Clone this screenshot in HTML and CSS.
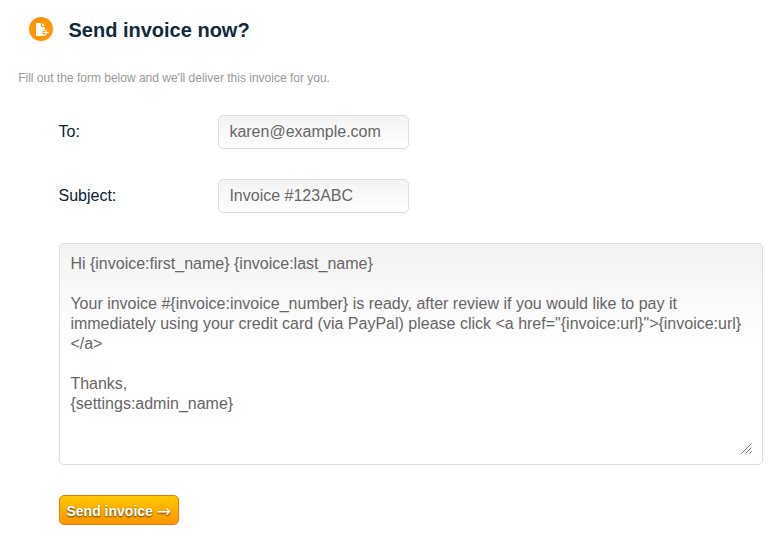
FILE: index.html
```html
<!DOCTYPE html>
<html lang="en">
<head>
<meta charset="utf-8">
<title>Send invoice</title>
<link rel="stylesheet" href="styles.css">
</head>
<body>
<main class="page">
  <header class="header">
    <svg class="header-icon" width="24" height="24" viewBox="0 0 24 24" aria-hidden="true">
      <circle cx="12" cy="12" r="12" fill="#ff9500"/>
      <path d="M7 6h5v4h4v9H7z" fill="#fff"/>
      <path d="M13 6l3 3h-3z" fill="#fff"/>
      <path d="M17 12v8M13.500 15.500h7" stroke="#ff9500" stroke-width="3"/>
      <path d="M17 12.500v6M14 15.500h6" stroke="#fff" stroke-width="1.200"/>
    </svg>
    <h1 class="title">Send invoice now?</h1>
  </header>
  <p class="intro">Fill out the form below and we'll deliver this invoice for you.</p>
  <form class="form">
    <div class="row">
      <label class="label" for="to">To:</label>
      <input class="field" id="to" type="text" value="karen@example.com">
    </div>
    <div class="row">
      <label class="label" for="subject">Subject:</label>
      <input class="field" id="subject" type="text" value="Invoice #123ABC">
    </div>
    <div class="message-box">
      <textarea class="message" aria-label="Message">Hi {invoice:first_name} {invoice:last_name}

Your invoice #{invoice:invoice_number} is ready, after review if you would like to pay it
immediately using your credit card (via PayPal) please click &lt;a href="{invoice:url}"&gt;{invoice:url}
&lt;/a&gt;

Thanks,
{settings:admin_name}</textarea>
      <svg class="grip" width="11" height="11" viewBox="0 0 11 11" aria-hidden="true">
        <path d="M.5 10.500l10-10M4.500 10.500l6-6M8.500 10.500l2-2" stroke="#777" stroke-width="1"/>
      </svg>
    </div>
    <button class="send" type="button">Send invoice <span class="arrow">→</span></button>
  </form>
</main>
</body>
</html>
```
FILE: styles.css
```css
* { box-sizing: border-box; }
body {
  margin: 0;
  background: #fff;
  color: #112a3a;
  font-family: "Liberation Sans", Arial, sans-serif;
  overflow: hidden;
}
.page { padding: 17px 12px 0 18px; }
.header {
  display: flex;
  align-items: center;
  gap: 15.5px;
  height: 24px;
  padding-left: 11px;
}
.header-icon { display: block; }
.title { margin: 0; padding-top: 2px; font-size: 20px; line-height: 24px; }
.intro {
  margin: 29px 0 0;
  padding-left: 0.2px;
  color: #999;
  font-size: 12px;
  line-height: 16px;
}
.form { padding: 29px 0 0 41px; }
.row { display: flex; align-items: center; height: 34px; margin-bottom: 30px; }
.label {
  width: 159.5px;
  margin-left: -0.5px;
  font-size: 16px;
  line-height: 20px;
  color: #0a2231;
}
.field {
  width: 191px;
  height: 34px;
  padding: 0 10px 0 10.4px;
  border: 1px solid #ddd;
  border-radius: 5px;
  background: linear-gradient(#f3f3f3, #fff);
  color: #666;
  font: 16px/20px "Liberation Sans", Arial, sans-serif;
}
.message-box {
  position: relative;
  width: 704px;
  height: 222px;
  border: 1px solid #ddd;
  border-radius: 5px;
  background: linear-gradient(#f3f3f3, #fff 100px);
}
.message {
  display: block;
  width: 100%;
  height: 100%;
  padding: 10px 10px 10px 10.4px;
  border: 0;
  background: transparent;
  color: #666;
  font: 16px/20px "Liberation Sans", Arial, sans-serif;
  white-space: pre;
  overflow: hidden;
  resize: none;
}
.grip { position: absolute; right: 10px; bottom: 10px; }
.send {
  display: block;
  width: 120px;
  height: 30px;
  margin-top: 30px;
  padding: 2px 0 0 6.5px;
  border: 1px solid #d9820a;
  border-radius: 5px;
  background: linear-gradient(#ffc800, #ff9500);
  color: #fff;
  font: bold 14px/16px "Liberation Sans", Arial, sans-serif;
  text-align: left;
  text-shadow: 0 1px 2px rgba(0, 0, 0, 0.7);
  white-space: nowrap;
}
.arrow {
  font-family: "DejaVu Sans", sans-serif;
  font-size: 17px;
  font-weight: normal;
  line-height: 1px;
  vertical-align: -1px;
}
```
